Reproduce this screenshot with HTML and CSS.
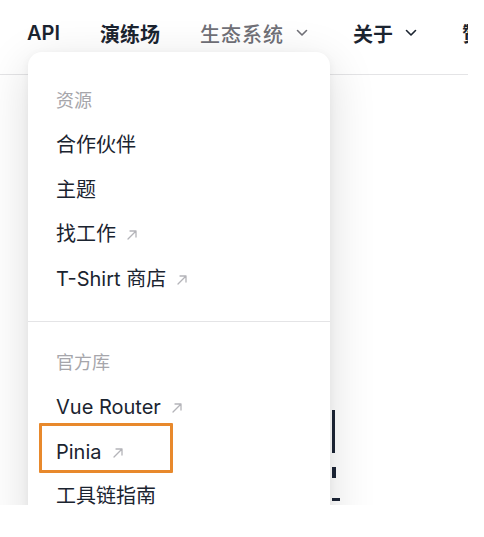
FILE: index.html
```html
<!DOCTYPE html>
<html lang="zh-CN">
<head>
<meta charset="utf-8">
<title>生态系统</title>
<link rel="stylesheet" href="styles.css">
</head>
<body>
<div class="viewport">
  <header class="nav">
    <a class="nav-link">API</a>
    <a class="nav-link">演练场</a>
    <a class="nav-link is-open">生态系统<svg class="chev" viewBox="0 0 12 8"><path d="M1.5 1.5l4.5 4.5 4.5-4.5"/></svg></a>
    <a class="nav-link">关于<svg class="chev" viewBox="0 0 12 8"><path d="M1.5 1.5l4.5 4.5 4.5-4.5"/></svg></a>
    <a class="nav-link">赞助</a>
  </header>
  <div class="divider"></div>
  <div class="behind">
    <div class="bar-tall"></div>
    <div class="bar-square"></div>
    <div class="bar-foot"></div>
  </div>

  <div class="menu">
    <section class="group">
      <p class="title">资源</p>
      <a class="item">合作伙伴</a>
      <a class="item">主题</a>
      <a class="item">找工作<svg class="ext" viewBox="0 0 12 12"><path d="M2 10L10 2M4 2h6v6"/></svg></a>
      <a class="item">T-Shirt 商店<svg class="ext" viewBox="0 0 12 12"><path d="M2 10L10 2M4 2h6v6"/></svg></a>
    </section>
    <section class="group group-sep">
      <p class="title">官方库</p>
      <a class="item">Vue Router<svg class="ext" viewBox="0 0 12 12"><path d="M2 10L10 2M4 2h6v6"/></svg></a>
      <a class="item highlighted">Pinia<svg class="ext" viewBox="0 0 12 12"><path d="M2 10L10 2M4 2h6v6"/></svg></a>
      <a class="item">工具链指南</a>
    </section>
  </div>
</div>
</body>
</html>
```
FILE: styles.css
```css
html, body {
  margin: 0;
  padding: 0;
  background: #ffffff;
}

body {
  font-family: "Inter", "Noto Sans CJK SC", "Noto Sans", sans-serif;
  color: #213547;
}

.viewport {
  position: relative;
  width: 484px;
  height: 505px;
  overflow: hidden;
}

.nav {
  display: flex;
  align-items: center;
  gap: 40px;
  width: 441px;
  height: 66px;
  padding-left: 27px;
  overflow: hidden;
  white-space: nowrap;
}

.nav-link {
  display: flex;
  align-items: center;
  flex: none;
  font-size: 20px;
  font-weight: 600;
  color: #1b2430;
}

.nav-link.is-open {
  color: #707077;
  font-weight: 500;
  letter-spacing: 1px;
}

.chev {
  width: 12px;
  height: 8px;
  margin-left: 12px;
  margin-right: 5px;
  fill: none;
  stroke: currentColor;
  stroke-width: 1.6;
  stroke-linecap: round;
  stroke-linejoin: round;
}

.divider {
  height: 1px;
  margin-top: 8px;
  width: 468px;
  background: #e4e4e6;
}

.behind {
  display: flex;
  flex-direction: column;
  padding-left: 332px;
  margin-top: 335px;
}

.bar-tall {
  width: 3px;
  height: 43px;
  background: #1c2536;
}

.bar-square {
  width: 4px;
  height: 11px;
  margin-top: 14px;
  background: #1c2536;
}

.bar-foot {
  width: 8px;
  height: 3px;
  margin-top: 20px;
  background: #1c2536;
}

.menu {
  position: absolute;
  left: 28px;
  top: 52px;
  width: 302px;
  padding-top: 27px;
  background: #ffffff;
  border-radius: 14px;
  box-shadow: 0 12px 48px rgba(0, 0, 0, 0.14), 0 2px 8px rgba(0, 0, 0, 0.05);
}

.group {
  padding: 0 0 20px 28px;
}

.group-sep {
  border-top: 1px solid #e4e4e6;
  padding-top: 19px;
}

.title {
  margin: 0;
  font-size: 18px;
  line-height: 44px;
  font-weight: 400;
  color: #a6a6ab;
}

.item {
  position: relative;
  display: flex;
  align-items: center;
  width: max-content;
  font-size: 20px;
  line-height: 44.5px;
  font-weight: 400;
  color: #1b2430;
}

.ext {
  width: 12px;
  height: 12px;
  margin-left: 10px;
  margin-top: 2px;
  fill: none;
  stroke: #b4b4b9;
  stroke-width: 1.3;
  stroke-linecap: round;
  stroke-linejoin: round;
}

.highlighted::after {
  content: "";
  position: absolute;
  left: -17px;
  top: -7px;
  width: 128px;
  height: 44px;
  border: 3px solid #e8892c;
  border-radius: 1px;
}
```
